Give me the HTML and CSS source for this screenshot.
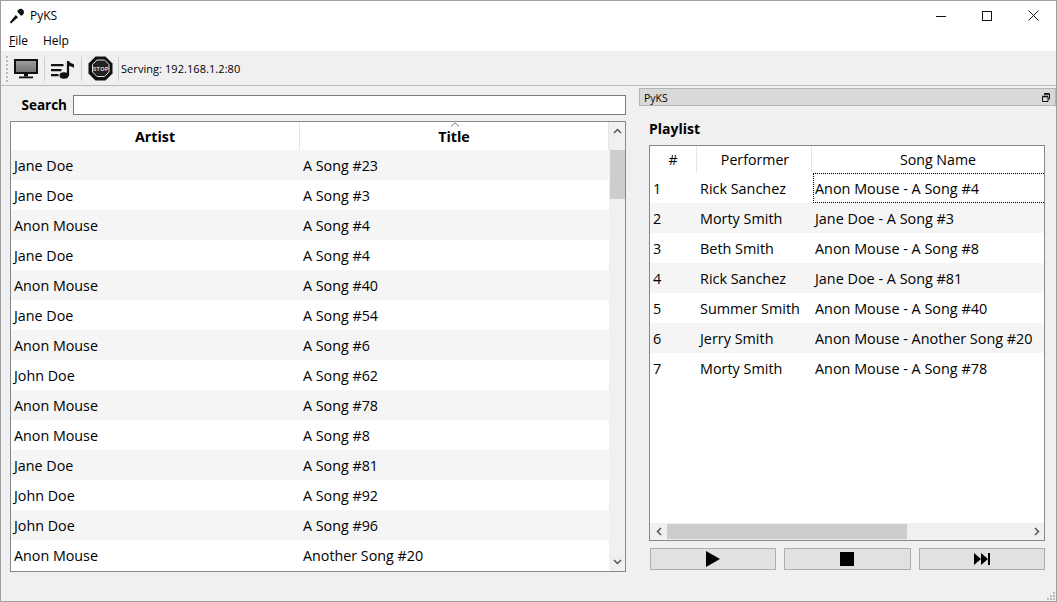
FILE: index.html
```html
<!DOCTYPE html>
<html lang="en">
<head>
<meta charset="utf-8">
<title>PyKS</title>
<link rel="stylesheet" href="styles.css">
</head>
<body>
<div class="window">
  <header class="titlebar">
    <svg class="app-icon" width="16" height="16" viewBox="0 0 16 16"><path d="M0.800 14.200L2 15.500L9 9.300L6.800 7Z" fill="#111"/><path d="M7.600 6.200L10 8.600" stroke="#fff" stroke-width=".8"/><path d="M8.200 3.500A3.700 3.700 0 0 1 13.800 1.500A3.700 3.700 0 0 1 12 7.800Z" fill="#111"/></svg>
    <span class="app-name">PyKS</span>
    <div class="winctl">
      <svg width="10" height="10" viewBox="0 0 10 10"><path d="M0 5.500H10" stroke="#111" fill="none"/></svg>
      <svg width="10" height="10" viewBox="0 0 10 10"><rect x="0.500" y="0.500" width="9" height="9" stroke="#111" fill="none"/></svg>
      <svg width="11" height="11" viewBox="0 0 11 11"><path d="M0.500 0.500L10.500 10.500M10.500 0.500L0.500 10.500" stroke="#111" fill="none"/></svg>
    </div>
  </header>
  <nav class="menubar">
    <span class="menu"><u>F</u>ile</span>
    <span class="menu">Help</span>
  </nav>
  <div class="toolbar">
    <span class="grip"></span>
    <svg class="tool" width="26" height="24" viewBox="0 0 26 24"><defs><linearGradient id="screen" x1="0" y1="0" x2="0" y2="1"><stop offset="0" stop-color="#a0a0a0"/><stop offset="1" stop-color="#707070"/></linearGradient></defs><rect x="1" y="3" width="22" height="13" fill="url(#screen)" stroke="#111" stroke-width="2"/><path d="M10 17h4v2.500h-4z" fill="#111"/><path d="M5 19.500h14v1.800H5z" fill="#111"/></svg>
    <span class="sep"></span>
    <svg class="tool" width="26" height="24" viewBox="0 0 26 24"><path d="M0 7h12.500v2.300H0zM0 12h10.500v2.300H0zM0 17h7.500v2.300H0z" fill="#111"/><path d="M17 4v15" stroke="#111" stroke-width="2.200"/><ellipse cx="13" cy="18.500" rx="4.500" ry="3.200" fill="#111"/><path d="M16 4h2c.5 2 4 2.500 5 3.500v3.500c-1.500-1.500-4-2-7-2.500z" fill="#111"/></svg>
    <span class="sep"></span>
    <svg class="tool" width="26" height="26" viewBox="0 0 26 26"><path d="M7.500 0.500h10l7 7v10l-7 7h-10l-7-7v-10z" fill="#111"/><path d="M9 4h7.500l4.500 4.500v7.500l-4.500 4.500H9l-4.500-4.500V8.500z" fill="#222" stroke="#ddd" stroke-width="1"/><text x="12.700" y="14.500" class="stop-text">STOP</text></svg>
    <span class="sep"></span>
    <span class="status">Serving: 192.168.1.2:80</span>
  </div>
  <main class="content">
    <section class="left">
      <div class="search">
        <label class="search-label" for="q">Search</label>
        <input class="search-input" id="q" type="text">
      </div>
      <div class="songs">
        <div class="songs-body">
          <div class="songs-head">
            <div class="h-artist">Artist</div>
            <div class="h-title"><svg class="sort" width="10" height="5" viewBox="0 0 10 5"><path d="M1 4.500L5 .8L9 4.500" stroke="#777" fill="none"/></svg>Title</div>
          </div>
          <div class="row alt"><span class="artist">Jane Doe</span><span>A Song #23</span></div>
          <div class="row"><span class="artist">Jane Doe</span><span>A Song #3</span></div>
          <div class="row alt"><span class="artist">Anon Mouse</span><span>A Song #4</span></div>
          <div class="row"><span class="artist">Jane Doe</span><span>A Song #4</span></div>
          <div class="row alt"><span class="artist">Anon Mouse</span><span>A Song #40</span></div>
          <div class="row"><span class="artist">Jane Doe</span><span>A Song #54</span></div>
          <div class="row alt"><span class="artist">Anon Mouse</span><span>A Song #6</span></div>
          <div class="row"><span class="artist">John Doe</span><span>A Song #62</span></div>
          <div class="row alt"><span class="artist">Anon Mouse</span><span>A Song #78</span></div>
          <div class="row"><span class="artist">Anon Mouse</span><span>A Song #8</span></div>
          <div class="row alt"><span class="artist">Jane Doe</span><span>A Song #81</span></div>
          <div class="row"><span class="artist">John Doe</span><span>A Song #92</span></div>
          <div class="row alt"><span class="artist">John Doe</span><span>A Song #96</span></div>
          <div class="row"><span class="artist">Anon Mouse</span><span>Another Song #20</span></div>
        </div>
        <div class="vscroll">
          <svg width="9" height="6" viewBox="0 0 9 6"><path d="M1 5L4.500 1.500L8 5" stroke="#555" stroke-width="1.500" fill="none"/></svg>
          <div class="vtrack"><div class="vthumb"></div></div>
          <svg width="9" height="6" viewBox="0 0 9 6"><path d="M1 1L4.500 4.500L8 1" stroke="#555" stroke-width="1.500" fill="none"/></svg>
        </div>
      </div>
    </section>
    <aside class="dock">
      <div class="dock-title">
        <span>PyKS</span>
        <svg width="8" height="9" viewBox="0 0 8 9"><path d="M2 1h5.500v5h-1.500" stroke="#111" stroke-width="1" fill="none"/><path d="M2 .8h5.500" stroke="#111" stroke-width="1.600"/><path d="M.5 3.500h5.500v5H.5z" stroke="#111" fill="none"/><path d="M.5 3.500h5.500" stroke="#111" stroke-width="1.600"/></svg>
      </div>
      <div class="dock-body">
        <h2 class="playlist-label">Playlist</h2>
        <div class="playlist">
          <div class="pl-head">
            <div class="c-num">#</div>
            <div class="c-perf head-perf">Performer</div>
            <div class="c-song head-song">Song Name</div>
          </div>
          <div class="pl-row"><span class="c-num left-text">1</span><span class="c-perf">Rick Sanchez</span><span class="c-song focus">Anon Mouse - A Song #4</span></div>
          <div class="pl-row alt"><span class="c-num left-text">2</span><span class="c-perf">Morty Smith</span><span class="c-song">Jane Doe - A Song #3</span></div>
          <div class="pl-row"><span class="c-num left-text">3</span><span class="c-perf">Beth Smith</span><span class="c-song">Anon Mouse - A Song #8</span></div>
          <div class="pl-row alt"><span class="c-num left-text">4</span><span class="c-perf">Rick Sanchez</span><span class="c-song">Jane Doe - A Song #81</span></div>
          <div class="pl-row"><span class="c-num left-text">5</span><span class="c-perf">Summer Smith</span><span class="c-song">Anon Mouse - A Song #40</span></div>
          <div class="pl-row alt"><span class="c-num left-text">6</span><span class="c-perf">Jerry Smith</span><span class="c-song">Anon Mouse - Another Song #20</span></div>
          <div class="pl-row"><span class="c-num left-text">7</span><span class="c-perf">Morty Smith</span><span class="c-song">Anon Mouse - A Song #78</span></div>
          <div class="pl-fill"></div>
          <div class="hscroll">
            <svg width="6" height="9" viewBox="0 0 6 9"><path d="M5 1L1.500 4.500L5 8" stroke="#555" stroke-width="1.500" fill="none"/></svg>
            <div class="htrack"><div class="hthumb"></div></div>
            <svg width="6" height="9" viewBox="0 0 6 9"><path d="M1 1L4.500 4.500L1 8" stroke="#555" stroke-width="1.500" fill="none"/></svg>
          </div>
        </div>
        <div class="controls">
          <button class="ctl" type="button"><svg width="14" height="16" viewBox="0 0 14 16"><path d="M0 0L14 8L0 16z" fill="#000"/></svg></button>
          <button class="ctl" type="button"><svg width="14" height="14" viewBox="0 0 14 14"><path d="M0 0h14v14H0z" fill="#000"/></svg></button>
          <button class="ctl" type="button"><svg width="16" height="12" viewBox="0 0 16 12"><path d="M0 0L7 6L0 12zM7 0L14 6L7 12zM14 0h2v12h-2z" fill="#000"/></svg></button>
        </div>
      </div>
    </aside>
  </main>
  <svg class="size-grip" width="9" height="9" viewBox="0 0 9 9"><path d="M7 1h2v2H7zM4 4h2v2H4zM7 4h2v2H7zM1 7h2v2H1zM4 7h2v2H4zM7 7h2v2H7z" fill="#bbb"/></svg>
</div>
</body>
</html>
```
FILE: styles.css
```css
* { box-sizing: border-box; }
html, body { margin: 0; padding: 0; height: 100%; }
body { font-family: "Open Sans", "Noto Sans", "Liberation Sans", sans-serif; color: #000; background: #f0f0f0; overflow: hidden; }
.window { position: relative; width: 1057px; height: 602px; border: 1px solid #a0a0a0; display: flex; flex-direction: column; background: #f0f0f0; }
.titlebar { height: 29px; background: #fff; display: flex; align-items: center; padding-left: 8px; flex: none; }
.app-icon { margin-right: 5px; }
.app-name { font-size: 12px; }
.winctl { margin-left: auto; display: flex; align-items: center; gap: 36px; padding-right: 17px; }
.menubar { height: 22px; background: #fff; display: flex; align-items: center; padding-left: 8px; gap: 15px; font-size: 12px; flex: none; border-bottom: 1px solid #f0f0f0; }
.toolbar { height: 34px; flex: none; display: flex; align-items: center; padding-left: 5px; border-bottom: 1px solid #bbb; background: #f0f0f0; }
.grip { width: 2px; height: 26px; margin-right: 6px; background: repeating-linear-gradient(to bottom, #bbb 0 2px, transparent 2px 4px); }
.tool { display: block; flex: none; }
.sep { width: 1px; height: 24px; background: #ccc; margin: 0 6px 0 4px; }
.stop-text { font-family: "Liberation Sans", sans-serif; font-size: 5.500px; font-weight: 700; letter-spacing: .3px; text-anchor: middle; fill: #ddd; }
.status { font-size: 11px; margin-left: -4px; letter-spacing: .06px; }
.content { flex: 1; min-height: 0; display: flex; }
.left { width: 638px; flex: none; padding: 9px 13px 0 9px; display: flex; flex-direction: column; }
.search { display: flex; align-items: center; height: 20px; flex: none; }
.search-label { width: 63px; text-align: right; padding-right: 6px; font-size: 13.500px; font-weight: 700; }
.search-input { flex: 1; height: 20px; border: 1px solid #7a7a7a; background: #fff; padding: 0; outline: none; }
.songs { margin-top: 6px; height: 451px; border: 1px solid #828790; background: #fff; display: flex; flex: none; }
.songs-body { width: 598px; flex: none; }
.songs-head { height: 28px; display: flex; font-size: 14.300px; font-weight: 700; }
.h-artist { width: 289px; text-align: center; line-height: 30px; border-right: 1px solid #e5e5e5; }
.h-title { position: relative; flex: 1; text-align: center; line-height: 30px; border-right: 1px solid #e5e5e5; }
.sort { position: absolute; left: 150px; top: 0; }
.row { height: 30px; display: flex; align-items: center; font-size: 14.300px; background: #fff; }
.row.alt { background: #f5f5f5; }
.artist { width: 289px; padding-left: 3px; flex: none; }
.row span + span { padding-left: 3px; }
.vscroll { flex: 1; display: flex; flex-direction: column; align-items: center; padding: 6px 0; background: #f0f0f0; }
.vtrack { flex: 1; width: 100%; margin: 16px 0 6px; }
.vthumb { height: 49px; background: #cdcdcd; width: 15px; margin: 0 auto; }
.dock { flex: 1; min-width: 0; padding-top: 2px; display: flex; flex-direction: column; }
.dock-title { height: 18px; flex: none; background: #d9d9d9; border: 1px solid #b4b4b4; font-size: 10.500px; display: flex; align-items: center; justify-content: space-between; padding: 1px 5px 0 4px; }
.dock-body { flex: 1; min-height: 0; padding: 13px 11px 0 10px; display: flex; flex-direction: column; }
.playlist-label { margin: 0; font-size: 14px; font-weight: 700; line-height: 20px; }
.playlist { margin-top: 6px; height: 396px; border: 1px solid #828790; background: #fff; display: flex; flex-direction: column; flex: none; }
.pl-head { height: 27px; display: flex; font-size: 14.200px; align-items: center; flex: none; }
.pl-head > div { height: 100%; display: flex; align-items: center; justify-content: center; border-right: 1px solid #e5e5e5; }
.pl-head > .c-song { border-right: 0; }
.pl-head > .head-perf { padding-left: 2px; }
.pl-head > .head-song { padding-left: 20px; }
.c-num { width: 47px; flex: none; }
.c-perf { width: 115px; flex: none; }
.c-song { flex: 1; }
.pl-row { height: 30px; display: flex; align-items: center; font-size: 14.400px; background: #fff; flex: none; white-space: nowrap; }
.pl-row.alt { background: #f5f5f5; }
.left-text { padding-left: 3px; }
.pl-row .c-perf { padding-left: 3px; }
.pl-row .c-song { padding-left: 3px; height: 30px; display: flex; align-items: center; }
.pl-row .focus { border: 1px dotted #000; border-right: 0; padding-left: 1px; margin-left: 1px; }
.pl-fill { flex: 1; }
.hscroll { height: 17px; flex: none; background: #f0f0f0; display: flex; align-items: center; padding: 0 4px 0 6px; }
.htrack { flex: 1; height: 15px; margin: 0 4px 0 5px; }
.hthumb { width: 240px; height: 15px; background: #cdcdcd; }
.controls { display: flex; gap: 8px; margin-top: 7px; padding-left: 1px; }
.ctl { flex: 1; height: 22px; background: #e1e1e1; border: 1px solid #adadad; padding: 0; display: flex; align-items: center; justify-content: center; }
.size-grip { position: absolute; right: 1px; bottom: 1px; }
```
